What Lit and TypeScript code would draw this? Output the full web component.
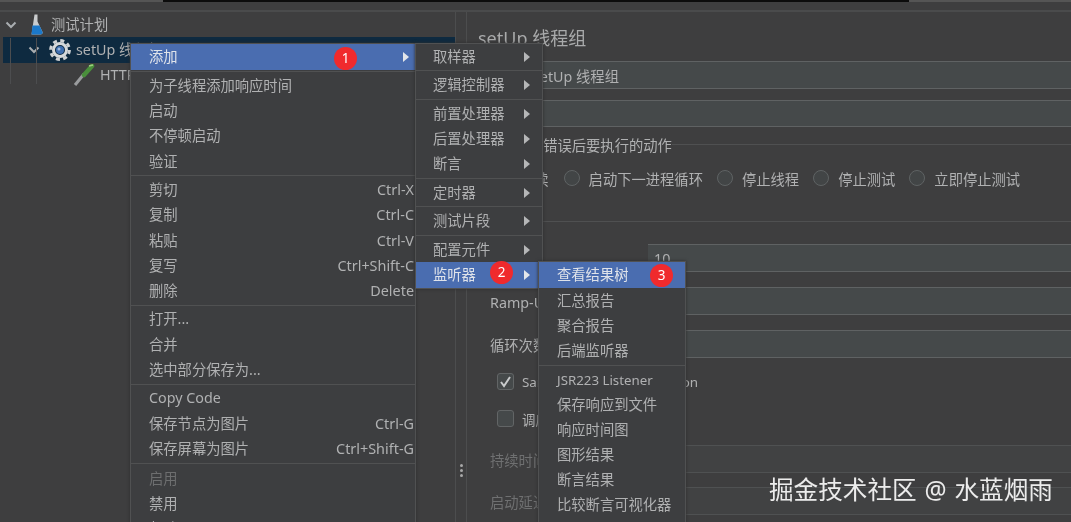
import { LitElement, html, css, nothing } from "lit";
import { customElement } from "lit/decorators.js";

type Item = { t?: string; k?: string; sub?: boolean; on?: boolean; off?: boolean; sep?: boolean; wide?: boolean; l?: boolean };

const main: Item[] = [
  { t: "添加", sub: true, on: true }, { sep: true },
  { t: "为子线程添加响应时间" }, { t: "启动" }, { t: "不停顿启动" }, { t: "验证" }, { sep: true },
  { t: "剪切", k: "Ctrl-X" }, { t: "复制", k: "Ctrl-C" }, { t: "粘贴", k: "Ctrl-V" }, { t: "复写", k: "Ctrl+Shift-C" }, { t: "删除", k: "Delete" }, { sep: true },
  { t: "打开..." }, { t: "合并" }, { t: "选中部分保存为..." }, { sep: true },
  { t: "Copy Code" }, { t: "保存节点为图片", k: "Ctrl-G" }, { t: "保存屏幕为图片", k: "Ctrl+Shift-G" }, { sep: true, wide: true },
  { t: "启用", off: true }, { t: "禁用" }, { t: "帮助" },
];
const second: Item[] = [
  { t: "取样器", sub: true }, { sep: true },
  { t: "逻辑控制器", sub: true }, { sep: true },
  { t: "前置处理器", sub: true }, { t: "后置处理器", sub: true }, { t: "断言", sub: true }, { sep: true },
  { t: "定时器", sub: true }, { sep: true },
  { t: "测试片段", sub: true }, { sep: true },
  { t: "配置元件", sub: true },
  { t: "监听器", sub: true, on: true },
];
const third: Item[] = [
  { t: "查看结果树", on: true }, { t: "汇总报告" }, { t: "聚合报告" }, { t: "后端监听器" }, { sep: true },
  { t: "JSR223 Listener", l: true }, { t: "保存响应到文件" }, { t: "响应时间图" }, { t: "图形结果" }, { t: "断言结果" }, { t: "比较断言可视化器" },
];

const chevron = html`<svg class="chev" width="12" height="8" viewBox="0 0 12 8"><path d="M1.5 1.500 6 6l4.500-4.500" fill="none" stroke="#a9adb0" stroke-width="2"/></svg>`;

@customElement("app-root")
export class AppRoot extends LitElement {
  static styles = css`
    :host { display: block; width: 1071px; height: 522px; overflow: hidden; background: #3e3e3f;
      font-family: "Noto Sans", "Noto Sans CJK SC", sans-serif; font-size: 14.3px; color: #b0b1b2; }
    .stage { position: relative; width: 1071px; height: 522px; overflow: hidden; }
    .ui { position: absolute; inset: 0; display: flex; flex-direction: column; filter: blur(0.7px); }
    .top { display: flex; height: 2px; flex: none; background: #555; }
    .top i { display: block; }
    .top .a { width: 163px; } .top .b { width: 746px; background: #0c0c0c; }
    .body { flex: 1; display: flex; min-height: 0; margin-top: 8px; border-top: 2px solid #4a4b4c; }
    .tree { width: 456px; flex: none; position: relative; box-sizing: border-box; border-right: 1px solid #4c4d4e; }
    .row { display: flex; align-items: center; line-height: 20px; white-space: nowrap; }
    .r1 { padding-left: 5px; height: 25px; }
    .r2 { background: #0e2a40; margin-left: 3px; padding-left: 25px; height: 26px; }
    .r3 { padding-left: 73px; height: 24px; }
    .chev { flex: none; }
    .r1 .chev { margin-right: 12px; }
    .r1 svg.ic { margin-right: 8px; }
    .r2 .chev { margin-right: 9px; }
    .r2 svg.ic { margin-right: 5px; }
    .r3 svg.ic { margin-right: 5px; }
    .guides { position: absolute; left: 10px; top: 26px; width: 25px; height: 46px; border-left: 1px solid #4c4d4f; border-right: 1px solid #4c4d4f; }
    .split { width: 10px; flex: none; display: flex; flex-direction: column; align-items: center; justify-content: flex-end; gap: 2px; padding-bottom: 45px; box-sizing: border-box; }
    .split b { width: 3px; height: 3px; border-radius: 50%; background: #a8a8a8; display: block; }
    .panel { flex: 1; min-width: 0; border-left: 1px solid #4c4d4e; display: flex; flex-direction: column; padding-top: 12px; }
    .title { font-size: 18px; line-height: 28px; margin-left: 11px; color: #a9aaab; }
    .field { background: #45494a; border-top: 1px solid #5f6263; border-bottom: 1px solid #5f6263; display: flex; align-items: center; flex: 1; min-width: 0; padding-left: 6px; box-sizing: border-box; }
    .full { flex: none; margin-left: 60px; margin-top: 9px; height: 28px; }
    .full + .full { margin-top: 11px; height: 27px; }
    .group { margin: 9px 0 0 0; display: flex; align-items: center; height: 20px; }
    .group span { line-height: 20px; padding-left: 19px; white-space: nowrap; }
    .group::after { content: ""; flex: 1; height: 1px; background: #4f5051; margin: 0 0 4px 0; }
    .radios { display: flex; align-items: center; height: 22px; margin: 11px 0 0 53px; white-space: nowrap; }
    .radios i { width: 16px; height: 16px; box-sizing: border-box; border-radius: 50%; border: 1px solid #5f6364; background: #424546; margin: 0 9px 0 14px; flex: none; }
    .radios i:nth-child(2) { margin-left: 15px; }
    .hr { height: 1px; background: #4f5051; margin-top: 32px; }
    .line { display: flex; align-items: stretch; margin-left: 23px; height: 28px; white-space: nowrap; }
    .line label { width: 158px; flex: none; align-self: center; }
    .lines { margin-top: 22px; display: flex; flex-direction: column; gap: 15px; }
    .dim { color: #6f7071; }
    .dimf { background: #414243; border-color: #4f5152; }
    .check { display: flex; align-items: center; margin-left: 30px; height: 17px; gap: 8px; white-space: nowrap; font-size: 13.4px; }
    .box { width: 17px; height: 17px; box-sizing: border-box; border: 1px solid #626566; background: #45494a; border-radius: 3px; flex: none; display: flex; align-items: center; justify-content: center; }
    .c1 { margin-top: 15px; } .c2 { margin-top: 20px; }
    .lines2 { margin-top: 18px; display: flex; flex-direction: column; gap: 14px; }
    .menu { position: absolute; background: #3d3e40; border: 1px solid #505152; box-sizing: border-box; box-shadow: 0 0 3px #2d2d2d; }
    .m1 { left: 130px; top: 43px; width: 286px; height: 500px; }
    .m2 { left: 415px; top: 43px; width: 128px; height: 246px; }
    .m3 { left: 538px; top: 261px; width: 148px; height: 280px; }
    .mi { height: 25.2px; display: flex; align-items: center; line-height: 20px; white-space: nowrap; position: relative; }
    .m1 .mi { padding: 0 1px 0 18px; } .m2 .mi { padding: 0 12px 0 17px; } .m3 .mi { padding: 0 4px 0 18px; }
    .mi.on { background: #4a6db0; color: #dfe3ea; height: 26px; }
    .mi.off { color: #6d6e6f; }
    .mi .l { font-size: 13.3px; }
    .mi .k { margin-left: auto; font-size: 14.4px; }
    .mi .arrow { margin-left: auto; width: 0; height: 0; border-left: 6px solid #b5b6b7; border-top: 5px solid transparent; border-bottom: 5px solid transparent; }
    .m1 .arrow { margin-right: 5px; }
    .mi.on .arrow { border-left-color: #e3e6ea; }
    .sep { height: 3.4px; display: flex; align-items: center; }
    .sep.wide { height: 5px; }
    .sep::after { content: ""; display: block; height: 1px; width: 100%; background: #505152; }
    .badge { position: absolute; width: 23px; height: 23px; border-radius: 50%; background: #f02a2d; color: #fff; font-size: 13.5px; display: flex; align-items: center; justify-content: center; line-height: 1; filter: blur(0.3px); }
    .wm { position: absolute; left: 769px; top: 473px; font-size: 24.6px; line-height: 34px; color: #ececec; white-space: nowrap; word-spacing: 1.5px; filter: blur(0.3px); }
  `;

  private renderMenu(cls: string, items: Item[]) {
    return html`<div class="menu ${cls}">
      ${items.map((it) =>
        it.sep
          ? html`<div class="sep ${it.wide ? "wide" : ""}"></div>`
          : html`<div class="mi ${it.on ? "on" : ""} ${it.off ? "off" : ""}">
              <span class="${it.l ? "l" : ""}">${it.t}</span>
              ${it.k ? html`<span class="k">${it.k}</span>` : nothing}
              ${it.sub ? html`<span class="arrow"></span>` : nothing}
            </div>`
      )}
    </div>`;
  }

  render() {
    return html`<div class="stage">
      <div class="ui">
        <div class="top"><i class="a"></i><i class="b"></i></div>
        <div class="body">
          <div class="tree">
            <div class="guides"></div>
            <div class="row r1">${chevron}
              <svg class="ic" width="14" height="21" viewBox="0 0 14 21">
                <path d="M5.500 0.500h3v7l5 10.500q.6 2.500-2 2.500h-9q-2.600-2-2.500L5.500 7.500z" fill="#c9ccce"/>
                <path d="M3.500 11.500h7l3 6.500q.6 2.500-2 2.500h-9q-2.600-2-2.500z" fill="#1b78c9"/>
              </svg>
              <span>测试计划</span></div>
            <div class="row r2">${chevron}
              <svg class="ic" width="22" height="22" viewBox="0 0 22 22">
                <circle cx="11" cy="11" r="9.400" fill="none" stroke="#cfd2d4" stroke-width="3" stroke-dasharray="4 3.380"/>
                <circle cx="11" cy="11" r="6.500" fill="none" stroke="#d6d9db" stroke-width="3"/>
                <circle cx="11" cy="11" r="4" fill="#3f6fb0"/>
                <circle cx="10" cy="10" r="1.500" fill="#9db9dc"/>
              </svg>
              <span>setUp 线程组</span></div>
            <div class="row r3">
              <svg class="ic" width="22" height="22" viewBox="0 0 22 22">
                <path d="M2 21 L11 10" stroke="#9a9c9e" stroke-width="3"/>
                <path d="M11 11 L19 2" stroke="#4a8f3c" stroke-width="4.500" stroke-linecap="round"/>
                <path d="M16 2 L20 1" stroke="#9fcf7f" stroke-width="1.500"/>
              </svg>
              <span>HTTP请求</span></div>
          </div>
          <div class="split"><b></b><b></b><b></b></div>
          <div class="panel">
            <div class="title">setUp 线程组</div>
            <div class="field full">setUp 线程组</div>
            <div class="field full"></div>
            <div class="group"><span>在取样器错误后要执行的动作</span></div>
            <div class="radios"><span>继续</span><i></i><span>启动下一进程循环</span><i></i><span>停止线程</span><i></i><span>停止测试</span><i></i><span>立即停止测试</span></div>
            <div class="hr"></div>
            <div class="lines">
              <div class="line"><label>线程数：</label><div class="field">10</div></div>
              <div class="line"><label>Ramp-Up时间（秒）：</label><div class="field"></div></div>
              <div class="line"><label>循环次数：</label><div class="field"></div></div>
            </div>
            <div class="check c1"><span class="box"><svg width="13" height="13" viewBox="0 0 13 13"><path d="M2 7l3 4 6-9" fill="none" stroke="#c9cbcc" stroke-width="2"/></svg></span>Same user on each iteration</div>
            <div class="check c2"><span class="box"></span>调度器</div>
            <div class="lines2">
              <div class="line dim"><label>持续时间（秒）</label><div class="field dimf"></div></div>
              <div class="line dim"><label>启动延迟（秒）</label><div class="field dimf"></div></div>
            </div>
          </div>
        </div>
        ${this.renderMenu("m1", main)}
        ${this.renderMenu("m2", second)}
        ${this.renderMenu("m3", third)}
      </div>
      <div class="badge" style="left:334px;top:47px">1</div>
      <div class="badge" style="left:490px;top:261px">2</div>
      <div class="badge" style="left:650px;top:264px">3</div>
      <div class="wm">掘金技术社区 @ 水蓝烟雨</div>
    </div>`;
  }
}
